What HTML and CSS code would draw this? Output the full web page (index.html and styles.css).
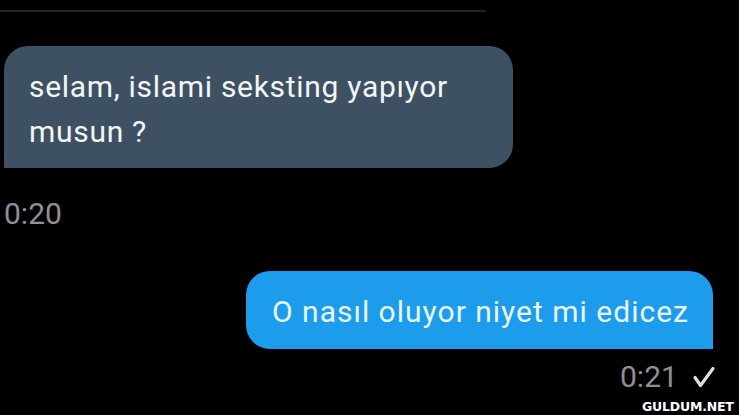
FILE: index.html
```html
<!DOCTYPE html>
<html>
<head>
<meta charset="utf-8">
<link rel="stylesheet" href="styles.css">
</head>
<body>
<div class="chat">
  <div class="divider"></div>
  <div class="bubble in">selam, islami seksting yapıyor<br>musun ?</div>
  <div class="time in-time">0:20</div>
  <div class="bubble out">O nasıl oluyor niyet mi edicez</div>
  <div class="time out-time">0:21
    <svg class="check" width="24" height="22" viewBox="0 0 24 22"><path d="M3 11.5 L8.5 19.5 L21 2.5" fill="none" stroke="#dcdfe2" stroke-width="3.2" stroke-linecap="round" stroke-linejoin="round"/></svg>
  </div>
  <div class="mark">GULDUM.NET</div>
</div>
</body>
</html>
```
FILE: styles.css
```css
html, body {
  margin: 0;
  padding: 0;
  background: #000;
  height: 100%;
  overflow: hidden;
}
.chat {
  display: flex;
  flex-direction: column;
  font-family: Roboto, "Noto Sans", sans-serif;
  width: 739px;
  height: 415px;
}
.divider {
  margin-top: 10px;
  width: 486px;
  height: 2px;
  background: #202427;
}
.bubble {
  font-size: 30px;
  box-sizing: border-box;
}
.in {
  margin-top: 34px;
  margin-left: 4px;
  width: 509px;
  height: 122px;
  padding: 18px 0 0 25px;
  line-height: 45px;
  letter-spacing: 0.7px;
  background: #3e5163;
  color: #f4f5f6;
  border-radius: 24px 24px 24px 0;
}
.time {
  color: #8e9195;
  font-size: 30px;
  line-height: 30px;
}
.in-time {
  margin-top: 31px;
  margin-left: 4px;
}
.out {
  align-self: flex-start;
  margin-top: 42px;
  margin-left: 246px;
  width: 467px;
  height: 78px;
  padding: 21px 0 0 26px;
  line-height: 40px;
  letter-spacing: 1px;
  background: #1e9cec;
  color: #e8f6ff;
  border-radius: 24px 24px 0 24px;
}
.out-time {
  margin-top: 13px;
  margin-left: 620px;
  display: flex;
  align-items: center;
  gap: 14px;
}
.check {
  display: block;
}
.mark {
  margin-top: 8px;
  margin-left: 642px;
  color: #fff;
  font-family: "DejaVu Sans", sans-serif;
  font-weight: 700;
  font-size: 12.5px;
  letter-spacing: -0.2px;
  line-height: 14px;
}
```
